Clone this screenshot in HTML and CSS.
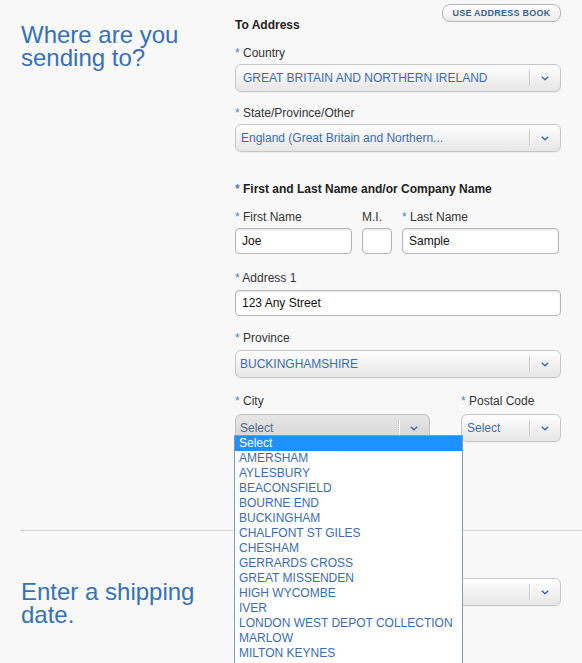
FILE: index.html
```html
<!DOCTYPE html>
<html lang="en">
<head>
<meta charset="utf-8">
<title>Where are you sending to?</title>
<link rel="stylesheet" href="styles.css">
</head>
<body>
<div class="page">
  <section class="sec sec-address">
    <h1 class="sec-title">Where are you sending to?</h1>
    <div class="form">
      <div class="form-head">
        <h2 class="head-title">To Address</h2>
        <button class="btn" type="button">USE ADDRESS BOOK</button>
      </div>

      <div class="field">
        <label class="lbl"><span class="req">*</span> Country</label>
        <div class="select">
          <span class="val val-wide">GREAT BRITAIN AND NORTHERN IRELAND</span>
          <span class="arrow"><svg width="8" height="5" viewBox="0 0 8 5"><path d="M0.8 0.8 L4 3.8 L7.2 0.8" fill="none" stroke="#3a6cb2" stroke-width="1.5"/></svg></span>
        </div>
      </div>

      <div class="field">
        <label class="lbl"><span class="req">*</span> State/Province/Other</label>
        <div class="select">
          <span class="val val-mid">England (Great Britain and Northern...</span>
          <span class="arrow"><svg width="8" height="5" viewBox="0 0 8 5"><path d="M0.8 0.8 L4 3.8 L7.2 0.8" fill="none" stroke="#3a6cb2" stroke-width="1.5"/></svg></span>
        </div>
      </div>

      <div class="group-title"><span class="req">*</span> First and Last Name and/or Company Name</div>

      <div class="field name-row">
        <div class="col col-first">
          <label class="lbl"><span class="req">*</span> First Name</label>
          <div class="input">Joe</div>
        </div>
        <div class="col col-mi">
          <label class="lbl">M.I.</label>
          <div class="input"></div>
        </div>
        <div class="col col-last">
          <label class="lbl"><span class="req">*</span> Last Name</label>
          <div class="input">Sample</div>
        </div>
      </div>

      <div class="field field-addr">
        <label class="lbl"><span class="req">*</span> Address 1</label>
        <div class="input">123 Any Street</div>
      </div>

      <div class="field field-prov">
        <label class="lbl"><span class="req">*</span> Province</label>
        <div class="select">
          <span class="val">BUCKINGHAMSHIRE</span>
          <span class="arrow"><svg width="8" height="5" viewBox="0 0 8 5"><path d="M0.8 0.8 L4 3.8 L7.2 0.8" fill="none" stroke="#3a6cb2" stroke-width="1.5"/></svg></span>
        </div>
      </div>

      <div class="field city-row">
        <div class="col col-city">
          <label class="lbl"><span class="req">*</span> City</label>
          <div class="select select-open">
            <span class="val val-muted">Select</span>
            <span class="arrow arrow-dotted"><svg width="8" height="5" viewBox="0 0 8 5"><path d="M0.8 0.8 L4 3.8 L7.2 0.8" fill="none" stroke="#3a6cb2" stroke-width="1.5"/></svg></span>
          </div>
          <ul class="dropdown">
            <li class="opt opt-sel">Select</li>
            <li class="opt">AMERSHAM</li>
            <li class="opt">AYLESBURY</li>
            <li class="opt">BEACONSFIELD</li>
            <li class="opt">BOURNE END</li>
            <li class="opt">BUCKINGHAM</li>
            <li class="opt">CHALFONT ST GILES</li>
            <li class="opt">CHESHAM</li>
            <li class="opt">GERRARDS CROSS</li>
            <li class="opt">GREAT MISSENDEN</li>
            <li class="opt">HIGH WYCOMBE</li>
            <li class="opt">IVER</li>
            <li class="opt">LONDON WEST DEPOT COLLECTION</li>
            <li class="opt">MARLOW</li>
            <li class="opt">MILTON KEYNES</li>
          </ul>
        </div>
        <div class="col col-postal">
          <label class="lbl"><span class="req">*</span> Postal Code</label>
          <div class="select">
            <span class="val val-postal">Select</span>
            <span class="arrow"><svg width="8" height="5" viewBox="0 0 8 5"><path d="M0.8 0.8 L4 3.8 L7.2 0.8" fill="none" stroke="#3a6cb2" stroke-width="1.5"/></svg></span>
          </div>
        </div>
      </div>
    </div>
  </section>

  <section class="sec sec-date">
    <h1 class="sec-title sec-title-date">Enter a shipping date.</h1>
    <div class="form form-date">
      <div class="select">
        <span class="val"></span>
        <span class="arrow"><svg width="8" height="5" viewBox="0 0 8 5"><path d="M0.8 0.8 L4 3.8 L7.2 0.8" fill="none" stroke="#3a6cb2" stroke-width="1.5"/></svg></span>
      </div>
    </div>
  </section>
</div>
</body>
</html>
```

FILE: styles.css
```css
html, body {
  margin: 0;
  padding: 0;
}

body {
  background: #f8f8f8;
  font-family: "Liberation Sans", Arial, sans-serif;
  font-size: 12px;
  color: #333;
}

.page {
  position: relative;
  box-sizing: border-box;
  height: 663px;
  overflow: hidden;
  padding-left: 20px;
}

.sec {
  display: flex;
  align-items: flex-start;
}

.sec-address {
  padding-bottom: 88px;
}

.sec-title {
  box-sizing: border-box;
  width: 215px;
  flex: none;
  margin: 23px 0 0;
  padding-left: 1px;
  font-size: 24px;
  line-height: 23px;
  font-weight: normal;
  color: #3571b6;
}

.form {
  width: 326px;
  flex: none;
}

.form-head {
  display: flex;
  justify-content: space-between;
  align-items: flex-start;
}

.head-title {
  margin: 18px 0 0;
  font-size: 12px;
  line-height: 14px;
  font-weight: bold;
  color: #222;
}

.btn {
  box-sizing: border-box;
  margin-top: 4px;
  width: 119px;
  height: 18px;
  padding: 0;
  border: 1px solid #b4b4b4;
  border-radius: 8px;
  background: linear-gradient(#ffffff, #ececec);
  font-family: "Liberation Sans", Arial, sans-serif;
  font-size: 9px;
  font-weight: bold;
  letter-spacing: 0.25px;
  color: #3c5f8c;
  line-height: 16px;
}

.field {
  margin-top: 14px;
}

.lbl {
  display: block;
  line-height: 14px;
  margin-bottom: 4px;
  color: #333;
}

.req {
  color: #4f7fbb;
}

.select {
  box-sizing: border-box;
  height: 28px;
  border: 1px solid #c6c6c6;
  border-radius: 6px;
  background: linear-gradient(#fefefe, #e6e6e6);
  box-shadow: 0 1px 0 rgba(0, 0, 0, 0.04);
  display: flex;
  align-items: center;
  color: #3a6cb2;
  font-size: 12px;
}

.val {
  flex: 1;
  padding-left: 4px;
  white-space: nowrap;
  overflow: hidden;
}

.val-wide {
  padding-left: 7px;
}

.val-mid {
  padding-left: 5px;
}

.val-postal {
  padding-left: 5px;
}

.val-muted {
  color: #4f6a8e;
}

.arrow {
  position: relative;
  flex: none;
  width: 31px;
  height: 100%;
  display: flex;
  align-items: center;
  justify-content: center;
}

.arrow svg {
  display: block;
  margin-top: 1px;
}

.arrow::before {
  content: "";
  position: absolute;
  left: 0;
  top: 5px;
  bottom: 5px;
  border-left: 1px solid #c9c9c9;
  box-shadow: 1px 0 0 #ffffff;
}

.arrow-dotted::before {
  border-left: 1px dotted #bdbdbd;
}

.select-open {
  background: linear-gradient(#e6e6e6, #d6d6d6);
  border-color: #c0c0c0;
}

.group-title {
  margin-top: 30px;
  line-height: 14px;
  font-weight: bold;
  color: #222;
}

.name-row {
  display: flex;
  gap: 10px;
}

.col-first { width: 117px; }
.col-mi { width: 30px; }
.col-last { width: 157px; }

.input {
  box-sizing: border-box;
  height: 26px;
  border: 1px solid #b6b6b6;
  border-radius: 4px;
  background: #ffffff;
  box-shadow: inset 0 1px 2px rgba(0, 0, 0, 0.12);
  padding: 0 6px;
  line-height: 24px;
  font-size: 12px;
  color: #111;
}

.field-addr {
  margin-top: 17px;
}

.field-addr .lbl {
  margin-bottom: 5px;
}

.field-prov {
  margin-top: 15px;
}

.field-prov .lbl {
  margin-bottom: 5px;
}

.city-row {
  margin-top: 16px;
  display: flex;
  justify-content: space-between;
}

.city-row .lbl {
  margin-bottom: 6px;
}

.col-city {
  position: relative;
  width: 195px;
}

.col-postal {
  width: 100px;
}

.dropdown {
  position: absolute;
  top: 41px;
  left: -1px;
  width: 229px;
  height: 240px;
  box-sizing: border-box;
  margin: 0;
  padding: 0;
  list-style: none;
  border: 1px solid #7f9db9;
  background: #ffffff;
  z-index: 5;
}

.opt {
  padding-left: 4px;
  line-height: 15px;
  height: 15px;
  font-size: 12px;
  color: #3a6cb2;
  white-space: nowrap;
}

.opt-sel {
  background: #1e90ff;
  color: #ffffff;
}

.sec-date {
  border-top: 1px solid #d5d5d5;
}

.sec-title-date {
  margin-top: 49px;
}

.form-date {
  padding-top: 47px;
}
```
